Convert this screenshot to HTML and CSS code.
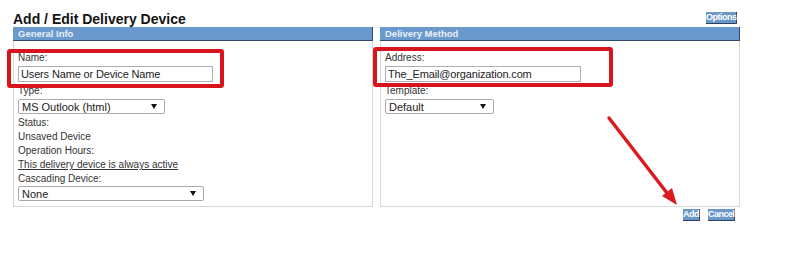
FILE: index.html
```html
<!DOCTYPE html>
<html lang="en">
<head>
    <meta charset="UTF-8">
    <meta name="viewport" content="width=device-width, initial-scale=1.0">
    <title>Add / Edit Delivery Device</title>
    <link rel="stylesheet" href="styles.css">
</head>
<body>

<div class="page">
    <div class="title-row">
        <h1>Add / Edit Delivery Device</h1>
        <button class="btn btn-options">Options</button>
    </div>

    <div class="columns">
        <!-- General info -->
        <div class="panel">
            <div class="panel-head">General Info</div>
            <div class="panel-body">
                <label class="label">Name:</label>
                <input class="text-input" type="text" value="Users Name or Device Name">
                <label class="label gap">Type:</label>
                <div class="select select-type"><span>MS Outlook (html)</span><i class="caret"></i></div>
                <div class="label gap">Status:</div>
                <div class="label">Unsaved Device</div>
                <div class="label">Operation Hours:</div>
                <div class="label"><a class="link" href="#">This delivery device is always active</a></div>
                <div class="label">Cascading Device:</div>
                <div class="select select-cascade"><span>None</span><i class="caret"></i></div>
            </div>
        </div>

        <!-- Delivery method -->
        <div class="panel">
            <div class="panel-head">Delivery Method</div>
            <div class="panel-body">
                <label class="label">Address:</label>
                <input class="text-input address-input" type="text" value="The_Email@organization.com">
                <label class="label gap">Template:</label>
                <div class="select select-template"><span>Default</span><i class="caret"></i></div>
            </div>
        </div>
    </div>

    <div class="actions">
        <button class="btn btn-add">Add</button>
        <button class="btn btn-cancel">Cancel</button>
    </div>

    <!-- annotation marks -->
    <div class="mark mark-name"></div>
    <div class="mark mark-address"></div>
    <svg class="arrow" width="800" height="265" viewBox="0 0 800 265">
        <line x1="609" y1="118" x2="667" y2="193" stroke="#dc1a1f" stroke-width="3.5" stroke-linecap="round"/>
        <polygon points="677,205 662,196 672,188" fill="#dc1a1f"/>
    </svg>
</div>

</body>
</html>
```

FILE: styles.css
```css
* {
    box-sizing: border-box;
}

body {
    font-family: "Liberation Sans", Arial, sans-serif;
    background-color: #fff;
    color: #333;
    margin: 0;
    padding: 0;
}

.page {
    position: relative;
    width: 740px;
    padding-left: 13px;
}

.title-row {
    display: flex;
    justify-content: space-between;
    align-items: flex-end;
    padding-top: 11px;
    height: 27px;
}

h1 {
    margin: 0;
    font-size: 14px;
    line-height: 16px;
    font-weight: bold;
    color: #141414;
}

.btn {
    font-family: "Liberation Sans", Arial, sans-serif;
    font-size: 9px;
    font-weight: bold;
    line-height: 11px;
    height: 12px;
    color: #fff;
    background-color: #6c97c9;
    border: none;
    border-right: 1px solid #2c4262;
    border-bottom: 1px solid #2c4262;
    padding: 0;
    letter-spacing: -0.5px;
    text-align: center;
    cursor: pointer;
}

.btn-options {
    width: 31px;
    margin: 0 3px 3px 0;
}

.columns {
    display: flex;
    gap: 7px;
}

.panel {
    width: 360px;
}

.panel-head {
    height: 14px;
    padding-left: 5px;
    background-color: #6a99cd;
    border-bottom: 1px solid #2f4a6e;
    border-right: 1px solid #2f4a6e;
    color: #e8f0f9;
    font-size: 9.5px;
    font-weight: bold;
    line-height: 13px;
}

.panel-body {
    height: 166px;
    padding: 10px 4px 0 4px;
    border: 1px solid #d6d6d6;
    border-top: none;
}

.label {
    display: block;
    font-size: 10px;
    line-height: 14px;
    color: #333;
}

.label.gap {
    margin-top: 2px;
}

.link {
    color: #333;
    text-decoration: underline;
}

.text-input {
    display: block;
    width: 195px;
    height: 16px;
    margin-top: 1px;
    padding: 0 2px;
    border: 1px solid #aab0b6;
    font-family: "Liberation Sans", Arial, sans-serif;
    font-size: 11px;
    letter-spacing: -0.15px;
    color: #222;
    outline: none;
}

.address-input {
    width: 196px;
}

.select {
    display: flex;
    justify-content: space-between;
    align-items: center;
    height: 15px;
    margin-top: 1px;
    padding: 0 7px 0 3px;
    border: 1px solid #aaa;
    border-radius: 2px;
    font-size: 11px;
    color: #222;
}

.select-type {
    width: 147px;
}

.select-cascade {
    width: 186px;
    margin-top: 0;
}

.select-template {
    width: 109px;
}

.caret {
    width: 0;
    height: 0;
    border-left: 3px solid transparent;
    border-right: 3px solid transparent;
    border-top: 5px solid #111;
}

.actions {
    display: flex;
    justify-content: flex-end;
    gap: 8px;
    padding: 2px 5px 0 0;
}

.btn-add {
    width: 17px;
}

.btn-cancel {
    width: 27px;
}

/* red annotation boxes over the form */
.mark {
    position: absolute;
    border: 4px solid #d8151c;
    border-radius: 3px;
}

.mark-name {
    left: 7px;
    top: 49px;
    width: 217px;
    height: 39px;
}

.mark-address {
    left: 373px;
    top: 47px;
    width: 240px;
    height: 40px;
}

.arrow {
    position: absolute;
    left: 0;
    top: 0;
    pointer-events: none;
}
```
